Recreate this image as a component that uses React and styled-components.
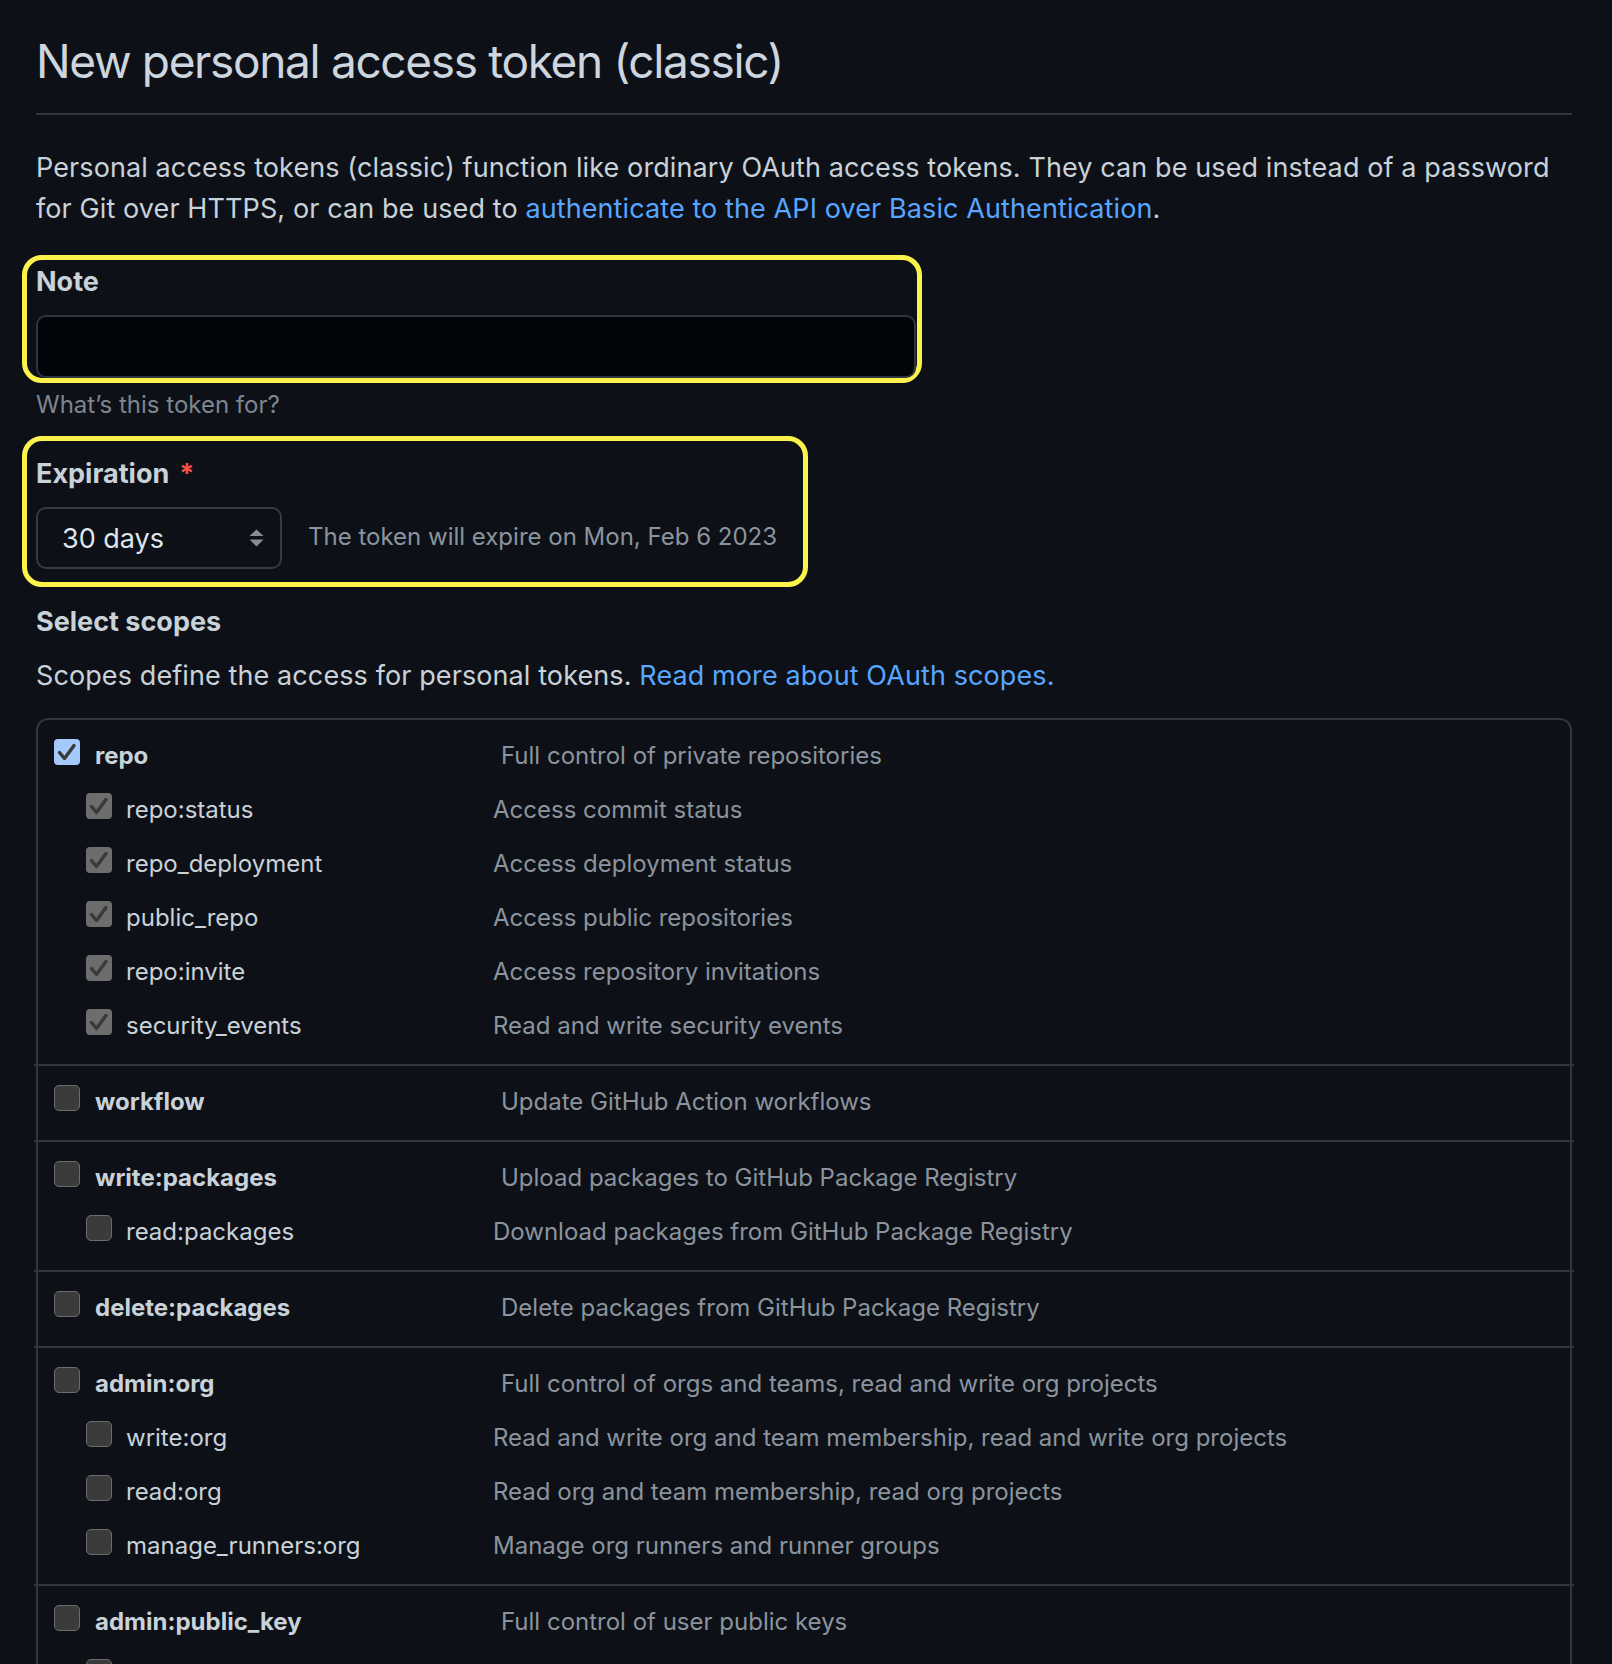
import React from 'react';
import styled, { createGlobalStyle } from 'styled-components';

const GlobalStyle = createGlobalStyle`
  html, body {
    margin: 0;
    padding: 0;
    background: #0d1117;
  }
  body {
    font-family: Inter, "Noto Sans", "Liberation Sans", sans-serif;
    color: #c9d1d9;
  }
  * {
    box-sizing: border-box;
  }
`;

const Page = styled.div`
  width: 1612px;
  height: 1664px;
  overflow: hidden;
  padding: 31px 40px 0 36px;
`;

const Title = styled.h1`
  margin: 0;
  font-size: 46px;
  font-weight: 400;
  line-height: 60px;
  letter-spacing: -1.35px;
  padding-bottom: 22px;
  border-bottom: 2px solid #30363d;
  color: #cdd5de;
`;

const Lead = styled.p`
  margin: ${(p) => p.$top || 0}px 0 0;
  font-size: 27px;
  line-height: 41px;
  letter-spacing: 0.1px;
  color: #c9d1d9;
`;

const Link = styled.a`
  color: #58a6ff;
  text-decoration: none;
`;

/* yellow annotation frame drawn around a form group */
const Highlight = styled.div`
  margin: ${(p) => p.$top}px 0 0 -14px;
  width: ${(p) => (p.$width ? p.$width + 'px' : 'fit-content')};
  border: 5px solid #fbf24b;
  border-radius: 20px;
  padding: ${(p) => p.$pad};
`;

const Label = styled.div`
  font-size: 27px;
  font-weight: 700;
  line-height: 36px;
  color: #c9d1d9;
  margin: ${(p) => p.$top || 0}px 0 15px;
`;

const Required = styled.span`
  color: #f85149;
  margin-left: 10px;
`;

const TextInput = styled.input`
  display: block;
  width: 880px;
  height: 63px;
  background: #010409;
  border: 2px solid #30363d;
  border-radius: 10px;
  outline: none;
  color: #c9d1d9;
  font: inherit;
`;

const Hint = styled.div`
  margin-top: 7px;
  font-size: 24px;
  line-height: 30px;
  color: #7d8590;
`;

const ExpiryRow = styled.div`
  display: flex;
  align-items: center;
  gap: 26px;
`;

const Select = styled.div`
  width: 246px;
  height: 62px;
  border: 2px solid #353b43;
  border-radius: 10px;
  display: flex;
  align-items: center;
  justify-content: space-between;
  padding: 0 16px 0 24px;
  font-size: 27px;
  color: #dfe5ec;
`;

const ExpiryText = styled.div`
  font-size: 24px;
  line-height: 30px;
  color: #8b949e;
  padding-bottom: 3px;
`;

const ScopeTable = styled.div`
  margin-top: 22px;
  border: 2px solid #30363d;
  border-radius: 12px;
`;

const Group = styled.div`
  padding: 9px 0 11px;
`;

const Divider = styled.div`
  height: 2px;
  margin: 0 -4px;
  background: #30363d;
`;

const Row = styled.div`
  display: flex;
  align-items: center;
  height: 54px;
  padding-left: ${(p) => (p.$child ? 48 : 16)}px;
  font-size: 24px;
  line-height: 30px;
`;

const Box = styled.span`
  flex: none;
  width: 26px;
  height: 26px;
  margin-bottom: 8px;
  border-radius: ${(p) => (p.$state === 'empty' ? 5 : 4)}px;
  background: ${(p) =>
    p.$state === 'checked' ? '#a3cafa' : p.$state === 'disabled' ? '#6d6d6d' : '#3b3b3b'};
  border: ${(p) => (p.$state === 'empty' ? '1.5px solid #6b6b6b' : 'none')};
  display: flex;
  align-items: center;
  justify-content: center;
`;

const ScopeName = styled.span`
  flex: none;
  width: ${(p) => (p.$child ? 367 : 406)}px;
  margin-left: ${(p) => (p.$child ? 14 : 15)}px;
  font-weight: ${(p) => (p.$child ? 400 : 700)};
  color: #c9d1d9;
`;

const ScopeDesc = styled.span`
  color: #8b949e;
  white-space: nowrap;
`;

const scopes = [
  {
    name: 'repo',
    desc: 'Full control of private repositories',
    checked: true,
    children: [
      ['repo:status', 'Access commit status'],
      ['repo_deployment', 'Access deployment status'],
      ['public_repo', 'Access public repositories'],
      ['repo:invite', 'Access repository invitations'],
      ['security_events', 'Read and write security events'],
    ],
  },
  { name: 'workflow', desc: 'Update GitHub Action workflows' },
  {
    name: 'write:packages',
    desc: 'Upload packages to GitHub Package Registry',
    children: [['read:packages', 'Download packages from GitHub Package Registry']],
  },
  { name: 'delete:packages', desc: 'Delete packages from GitHub Package Registry' },
  {
    name: 'admin:org',
    desc: 'Full control of orgs and teams, read and write org projects',
    children: [
      ['write:org', 'Read and write org and team membership, read and write org projects'],
      ['read:org', 'Read org and team membership, read org projects'],
      ['manage_runners:org', 'Manage org runners and runner groups'],
    ],
  },
  {
    name: 'admin:public_key',
    desc: 'Full control of user public keys',
    children: [
      ['write:public_key', 'Write user public keys'],
      ['read:public_key', 'Read user public keys'],
    ],
  },
];

function Checkbox({ state }) {
  return (
    <Box $state={state}>
      {state !== 'empty' && (
        <svg width="26" height="26" viewBox="0 0 26 26">
          <polyline
            points="5.5,13.5 10.5,19.5 20,6.5"
            fill="none"
            stroke="#3a3a3a"
            strokeWidth="3.4"
            strokeLinecap="round"
            strokeLinejoin="round"
          />
        </svg>
      )}
    </Box>
  );
}

function SelectArrows() {
  return (
    <svg width="15" height="18" viewBox="0 0 15 18">
      <polygon points="0.5,7 7.5,0.5 14.5,7" fill="#848d97" />
      <polygon points="0.5,10.5 7.5,17.5 14.5,10.5" fill="#848d97" />
    </svg>
  );
}

export default function App() {
  return (
    <Page>
      <GlobalStyle />
      <Title>New personal access token (classic)</Title>
      <Lead $top={32}>
        Personal access tokens (classic) function like ordinary OAuth access tokens. They can be
        used instead of a password for Git over HTTPS, or can be used to{' '}
        <Link>authenticate to the API over Basic Authentication</Link>.
      </Lead>

      <Highlight $top={26} $width={900} $pad="4px 0 0 9px">
        <Label>Note</Label>
        <TextInput type="text" />
      </Highlight>
      <Hint>What’s this token for?</Hint>

      <Highlight $top={16} $pad="15px 26px 13px 9px">
        <Label>
          Expiration<Required>*</Required>
        </Label>
        <ExpiryRow>
          <Select>
            <span>30 days</span>
            <SelectArrows />
          </Select>
          <ExpiryText>The token will expire on Mon, Feb 6 2023</ExpiryText>
        </ExpiryRow>
      </Highlight>

      <Label $top={17}>Select scopes</Label>
      <Lead>
        Scopes define the access for personal tokens. <Link>Read more about OAuth scopes.</Link>
      </Lead>

      <ScopeTable>
        {scopes.map((s, i) => (
          <React.Fragment key={s.name}>
            {i > 0 && <Divider />}
            <Group>
              <Row>
                <Checkbox state={s.checked ? 'checked' : 'empty'} />
                <ScopeName>{s.name}</ScopeName>
                <ScopeDesc>{s.desc}</ScopeDesc>
              </Row>
              {(s.children || []).map(([name, desc]) => (
                <Row $child key={name}>
                  <Checkbox state={s.checked ? 'disabled' : 'empty'} />
                  <ScopeName $child>{name}</ScopeName>
                  <ScopeDesc>{desc}</ScopeDesc>
                </Row>
              ))}
            </Group>
          </React.Fragment>
        ))}
      </ScopeTable>
    </Page>
  );
}
